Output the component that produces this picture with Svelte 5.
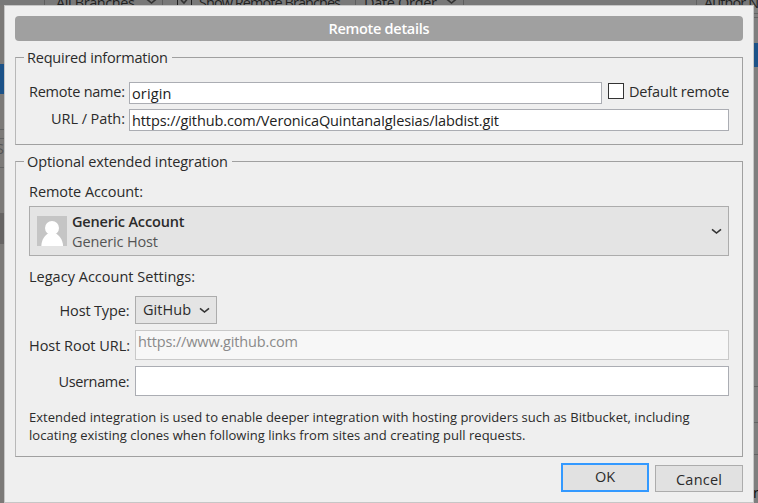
<script>
  // Spreads the letters of a label so that it takes the given width.
  function fit(node, width) {
    const gaps = node.textContent.length - 1;
    const natural = node.getBoundingClientRect().width;
    node.style.letterSpacing = `${(width - natural) / gaps}px`;
    node.style.marginRight = `${-(width - natural) / gaps}px`;
  }

  let name = $state('origin');
  let url = 'https://github.com/VeronicaQuintanaIglesias/labdist.git';
</script>

{#snippet chevron()}
  <svg class="chevron" width="11" height="7" viewBox="0 0 11 7"><path d="M1 1.3 5.5 5 10 1.3" /></svg>
{/snippet}

<div class="screen">
  <div class="toolbar">
    <div class="drop branches"><span use:fit={79}>All Branches</span>{@render chevron()}</div>
    <div class="show"><i class="box"><svg width="12" height="12" viewBox="0 0 12 12"><path d="M2 5 5 8 10 2" /></svg></i><span use:fit={142}>Show Remote Branches</span></div>
    <div class="drop order"><span use:fit={73}>Date Order</span>{@render chevron()}</div>
    <div class="author"><span use:fit={82}>Author Name</span></div>
  </div>
  <div class="backdrop">
    <div class="side left"><i class="sel"></i><i class="rule a"></i><i class="rule b"></i><span>S</span><i class="rule c"></i><i class="band"></i></div>
    <div class="side right"><i class="rule d"></i><i class="rule d2"></i><i class="sel"></i><i class="rule e"></i><i class="rule f"></i><i class="rule g"></i><span>r</span></div>
  </div>

  <div class="dialog">
    <div class="title"><span use:fit={101}>Remote details</span></div>

    <fieldset class="required">
      <legend><span use:fit={141}>Required information</span></legend>
      <div class="row first">
        <div class="label"><span use:fit={96}>Remote name:</span></div>
        <div class="input"><span use:fit={39.5}>{name}</span></div>
        <i class="check"></i>
        <div class="default"><span use:fit={100.5}>Default remote</span></div>
      </div>
      <div class="row">
        <div class="label"><span use:fit={74}>URL / Path:</span></div>
        <div class="input"><span use:fit={367}>{url}</span></div>
      </div>
    </fieldset>

    <fieldset class="optional">
      <legend><span use:fit={201}>Optional extended integration</span></legend>
      <div class="heading"><span use:fit={114}>Remote Account:</span></div>
      <div class="account">
        <svg class="avatar" width="30" height="30" viewBox="0 0 30 30">
          <rect width="30" height="30" fill="#c5c5c5" />
          <circle cx="15" cy="12" r="7" fill="#fff" />
          <path d="M4.3 30C4.8 23.5 7.5 19.3 11.8 17.3H18.2C22.5 19.3 25.6 23.5 26.1 30Z" fill="#fff" />
        </svg>
        <div class="who">
          <div><b use:fit={112.5}>Generic Account</b></div>
          <div class="host"><span use:fit={86}>Generic Host</span></div>
        </div>
        {@render chevron()}
      </div>
      <div class="heading legacy"><span use:fit={166}>Legacy Account Settings:</span></div>
      <div class="form">
        <div class="label"><span use:fit={70}>Host Type:</span></div>
        <div class="select"><span use:fit={48}>GitHub</span>{@render chevron()}</div>
        <div class="label lower"><span use:fit={101}>Host Root URL:</span></div>
        <div class="input disabled"><span use:fit={160}>https://www.github.com</span></div>
        <div class="label lower"><span use:fit={71}>Username:</span></div>
        <div class="input"></div>
      </div>
      <div class="note">
        <div><span use:fit={660.5}>Extended integration is used to enable deeper integration with hosting providers such as Bitbucket, including</span></div>
        <div><span use:fit={496.5}>locating existing clones when following links from sites and creating pull requests.</span></div>
      </div>
    </fieldset>

    <div class="actions">
      <div class="button ok"><span>OK</span></div>
      <div class="button"><span use:fit={46}>Cancel</span></div>
    </div>
  </div>
</div>

<style>
  .screen {
    position: relative;
    width: 758px;
    height: 503px;
    overflow: hidden;
    background: #7f7f7f;
    color: #2b2b2b;
    font: 14.5px/20px 'Open Sans', 'Noto Sans', sans-serif;
    white-space: nowrap;
  }
  .screen * { box-sizing: border-box; }
  span, b { display: inline-block; }
  b { font-weight: 600; }
  i { display: block; flex: none; }
  svg { flex: none; display: block; }
  path { stroke-linecap: butt; }
  .chevron path, .box path { fill: none; stroke: #333; stroke-width: 1.6; }

  .toolbar { display: flex; height: 5px; background: #797979; color: #222; }
  .toolbar > div { display: flex; height: 5px; line-height: 20px; flex: none; }
  .toolbar span { margin-top: -7px; height: 20px; }
  .drop.branches { margin-left: 44px; width: 119px; padding-left: 11px; border: solid #5e5e5e; border-width: 0 1px; }
  .branches .chevron { margin: -2px 0 0 11px; }
  .show { padding-left: 14px; width: 192px; }
  .box { width: 15px; height: 15px; margin: -9px 7px 0 0; border: 1px solid #222; }
  .box svg { margin: 3px 0 0 1px; }
  .drop.order { width: 109px; padding-left: 8px; border: solid #5e5e5e; border-width: 0 1px; }
  .order .chevron { margin: -2px 0 0 9px; }
  .author { margin-left: 232px; padding-left: 7px; border-left: 1px solid #606060; }

  .backdrop { display: flex; justify-content: space-between; height: 498px; }
  .side { width: 4px; overflow: hidden; }
  .side.left { background: #7c7a78; }
  .side.left .sel { height: 30px; margin-top: 59px; background: #1c5288; }
  .side.right .sel { height: 24px; margin-top: 25px; background: #1c5288; }
  .rule { height: 1px; background: #636363; }
  .a { margin-top: 35px; }
  .b { margin-top: 8px; }
  .side span { display: block; color: #555; height: 20px; line-height: 20px; margin-left: -4px; }
  .c { margin-top: 8px; }
  .band { height: 31px; margin-top: 45px; background: #666463; }
  .d { margin-top: 8px; }
  .d2 { margin-top: 3px; }
  .e { margin-top: 319px; }
  .f { margin-top: 35px; }
  .g { margin-top: 31px; }
  .side.right span { color: #111; margin: 28px 0 0 -1px; }

  .dialog {
    position: absolute;
    left: 4px;
    top: 5px;
    width: 750px;
    height: 498px;
    padding: 10px;
    border: 1px solid #c6c6c6;
    background: #efefef;
  }
  .title {
    height: 25px;
    border-radius: 4px;
    background: #a0a0a0;
    color: #fff;
    font-weight: 600;
    line-height: 25px;
    text-align: center;
  }
  fieldset { margin: 7px 0 0; min-width: 0; border: 1px solid #a0a0a0; border-left-color: #b8b8b8; padding: 0 13px; }
  legend { height: 19px; line-height: 19px; margin: 0 0 0 -5px; padding: 0 4px 0 3px; }
  .required { height: 97px; }
  .optional { height: 305px; }
  .row { display: flex; height: 22px; }
  .row.first { margin: 15px 0 5px; }
  .row .label { width: 100px; padding-right: 4px; text-align: right; line-height: 20px; }
  .input { flex: 1; border: 1px solid #abadb3; background: #fff; padding-left: 2px; line-height: 22px; color: #222; }
  .row .input { line-height: 21px; }
  .check { width: 16px; height: 16px; margin: 1px 5px 0 6px; border: 1px solid #333; background: #fff; }
  .default { width: 100px; line-height: 20px; }

  .heading { line-height: 22px; height: 20px; margin-top: 10px; }
  .account {
    display: flex;
    align-items: center;
    height: 50px;
    margin-top: 5px;
    padding: 0 6px 0 7px;
    border: 1px solid #acacac;
    background: #e4e4e4;
  }
  .who { flex: 1; padding: 2px 0 0 5px; line-height: 20px; }
  .host { color: #555; }
  .heading.legacy { margin-top: 11px; line-height: 20px; }
  .form { display: grid; grid-template-columns: 106px 1fr; grid-template-rows: 28px 30px 30px; row-gap: 6px; margin-top: 9px; }
  .form .label { text-align: right; padding-right: 5.5px; line-height: 30px; }
  .form .label.lower { line-height: 32px; }
  .select { display: flex; align-items: center; width: 82px; padding-left: 7px; border: 1px solid #acacac; background: #e4e4e4; }
  .select .chevron { margin-left: 8px; }
  .disabled { border-color: #c9c9c9; background: #f7f7f7; color: #8a8a8a; }
  .note { margin-top: 12px; font-size: 13px; line-height: 18px; }
  .actions { display: flex; justify-content: flex-end; align-items: flex-end; gap: 6px; margin-top: 6px; }
  .button { width: 88px; height: 27px; border: 1px solid #acacac; background: #e1e1e1; text-align: center; line-height: 27px; }
  .button.ok { height: 29px; border: 2px solid #3399ff; line-height: 24px; }
</style>
